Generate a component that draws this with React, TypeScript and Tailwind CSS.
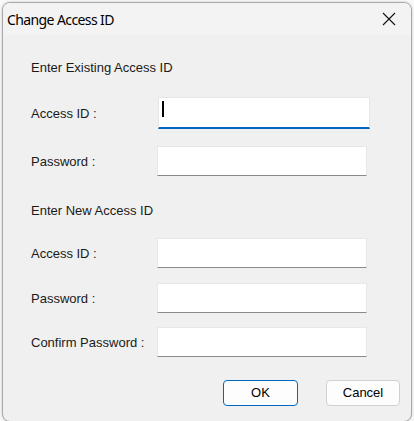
import React from "react";

function Field({ focused = false }: { focused?: boolean }) {
  if (focused) {
    return (
      <div className="relative ml-[1px] h-[32px] w-[212px] bg-white border border-[#e6e6e6] border-b-2 border-b-[#0067c0]">
        <div className="absolute left-[3px] top-[3px] h-[16px] w-[1.5px] bg-black" />
      </div>
    );
  }
  return <div className="h-[30px] w-[210px] bg-white border border-[#e8e8e8] border-b-[#8a8a8a]" />;
}

function Row({ label, focused = false, mt }: { label: string; focused?: boolean; mt: string }) {
  return (
    <div className={`flex items-center ${mt}`}>
      <div className="w-[126px] text-[13px] leading-[15px] text-[#1a1a1a]">{label}</div>
      <Field focused={focused} />
    </div>
  );
}

export default function App() {
  return (
    <div className="w-[414px] h-[421px] bg-[#f9f9f9] pl-[2px] pt-[2px] overflow-hidden" style={{ fontFamily: '"Liberation Sans", Arial, sans-serif' }}>
      <div className="w-[410px] h-[420px] rounded-[8px] border border-[#a9a9a9] bg-[#f0f0f0] overflow-hidden shadow-[0_0_3px_rgba(0,0,0,0.2)]">
        <div className="h-[32px] bg-[#f3f3f3] flex items-center justify-between pl-[4px] pr-[10px]">
          <span className="text-[14px] tracking-[-0.6px] text-black leading-[20px] mt-[1px]" style={{ fontFamily: '"Noto Sans", sans-serif' }}>
            Change Access ID
          </span>
          <svg width="14" height="14" viewBox="0 0 14 14" className="mr-[5px]">
            <path d="M1 1 L13 13 M13 1 L1 13" stroke="#111" strokeWidth="1.1" fill="none" />
          </svg>
        </div>
        <div className="pl-[28px]">
          <div className="mt-[25px] text-[13px] leading-[15px] text-[#1a1a1a]">Enter Existing Access ID</div>
          <Row label="Access ID :" focused mt="mt-[22px]" />
          <Row label="Password :" mt="mt-[17px]" />
          <div className="mt-[27px] text-[13px] leading-[15px] text-[#1a1a1a]">Enter New Access ID</div>
          <Row label="Access ID :" mt="mt-[20px]" />
          <Row label="Password :" mt="mt-[15px]" />
          <Row label="Confirm Password :" mt="mt-[14px]" />
          <div className="mt-[23px] flex justify-end pr-[11px] gap-[28px]">
            <button className="h-[26px] w-[75px] rounded-[4px] border border-[#0067c0] bg-[#fdfdfd] text-[13px] text-black">OK</button>
            <button className="h-[26px] w-[74px] rounded-[4px] border border-[#d0d0d0] bg-[#fdfdfd] text-[13px] text-black">Cancel</button>
          </div>
        </div>
      </div>
    </div>
  );
}
